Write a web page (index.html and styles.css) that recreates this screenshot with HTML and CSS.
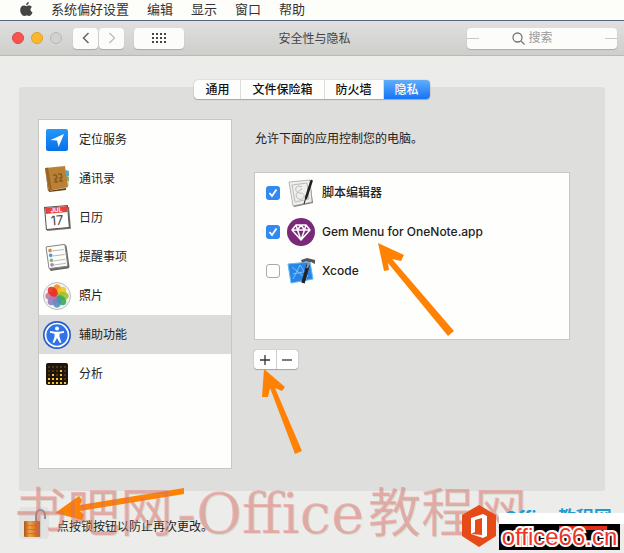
FILE: index.html
```html
<!DOCTYPE html>
<html lang="zh-CN">
<head>
<meta charset="utf-8">
<meta name="viewport" content="width=device-width, initial-scale=1">
<title>安全性与隐私</title>
<link rel="stylesheet" href="styles.css">
</head>
<body>
<nav class="menubar">
  <svg class="apple" width="14" height="16" viewBox="0 0 14 16" aria-hidden="true"><path fill="#444" d="M9.800 1c.1 1.700-1.200 3.300-2.700 3.300C6.900 2.700 8.300 1.200 9.800 1ZM7.200 5.200c.8 0 1.700-.7 3-.7 1.200 0 2.200.6 2.800 1.500-2.200 1.300-1.900 4.400.5 5.300-.5 1.500-1.700 3.700-3 3.700-1 0-1.400-.6-2.700-.6s-1.700.6-2.700.6C3.200 15 1.200 11.900 1.200 9c0-2.900 1.700-4.500 3.500-4.500 1.100 0 1.900.7 2.500.7Z"/></svg>
  <a href="#">系统偏好设置</a><a href="#">编辑</a><a href="#">显示</a><a href="#">窗口</a><a href="#">帮助</a>
</nav>
<header class="titlebar">
  <div class="tools">
    <button class="light red" aria-label="关闭"></button>
    <button class="light amber" aria-label="最小化"></button>
    <button class="light off" aria-label="缩放" disabled></button>
    <div class="history">
      <button aria-label="后退"><svg width="10" height="14" viewBox="0 0 10 14" fill="none" stroke="#666" stroke-width="1.500"><path d="M7.500 2 2.500 7l5 5"/></svg></button>
      <button aria-label="前进"><svg width="10" height="14" viewBox="0 0 10 14" fill="none" stroke="#bbb" stroke-width="1.300"><path d="m2.500 2 5 5-5 5"/></svg></button>
    </div>
    <button class="grid-button" aria-label="显示全部"><svg width="14" height="10" viewBox="0 0 14 10" stroke="#444" stroke-width="2" stroke-dasharray="2 2"><path d="M0 1h14M0 5h14M0 9h14"/></svg></button>
  </div>
  <h1>安全性与隐私</h1>
  <label class="search">
    <svg width="13" height="13" viewBox="0 0 13 13" fill="none" stroke="#777" stroke-width="1.300"><circle cx="5.500" cy="5.500" r="4.500"/><path d="m9 9 3.500 3.500"/></svg>
    <input type="text" placeholder="搜索" aria-label="搜索">
  </label>
</header>
<main>
  <div class="tabs">
    <button>通用</button><button>文件保险箱</button><button>防火墙</button><button class="active">隐私</button>
  </div>
  <section class="panel">
    <ul class="sidebar">
      <li><svg width="28" height="28" viewBox="0 0 28 28"><defs><linearGradient id="loc" x2="0" y2="1"><stop stop-color="#2598fb"/><stop offset="1" stop-color="#0870e8"/></linearGradient></defs><rect x="3" y="3" width="22" height="22" rx="2" fill="url(#loc)"/><path fill="#fff" d="M21 8 15.500 21l-1.500-6.500L7.500 14Z"/></svg><a href="#">定位服务</a></li>
      <li><svg width="28" height="28" viewBox="0 0 28 28"><path fill="#d8d4c6" d="m6 25 18-2 2-3-1-14-3-1Z"/><path fill="#5aa9c9" d="m23 5 3 1v5l-3 1Z"/><path fill="#78b568" d="m23 11 3 1v4h-3Z"/><path fill="#654016" d="m2 3 3 23 18-3v2L6 27Z"/><path fill="#b98036" d="m2 3 20-2 3 21-19 4Z"/><path fill="#996624" d="m2 3 3-.3L9 25l-3 1Z"/><g fill="none" stroke="#8a5a20" stroke-width="1.500"><path d="M10 10h3l1 3-2 1 2 3h-3M15 9h3l1 3-2 1 2 3h-3"/></g></svg><a href="#">通讯录</a></li>
      <li><svg width="28" height="28" viewBox="0 0 28 28"><g transform="rotate(-5 14 14)"><rect x="3" y="4" width="24" height="22" fill="#777"/><rect x="2.500" y="2.500" width="23" height="22" fill="#fff" stroke="#555"/><path fill="#e3433d" d="M3 3h22v6H3z"/><text x="14" y="8" text-anchor="middle" font-size="6" font-weight="700" fill="#fff">JUL</text><text x="14" y="21" text-anchor="middle" font-size="13" fill="#444">17</text></g></svg><a href="#">日历</a></li>
      <li><svg width="28" height="28" viewBox="0 0 28 28"><g transform="rotate(-8 14 14)"><rect x="5" y="3" width="20" height="24" rx="2" fill="#666"/><rect x="4.500" y="2.500" width="19" height="22" rx="1" fill="#fcfcf8" stroke="#888"/><path stroke="#bbb" d="M10 7.500h12M10 12.500h12M10 17.500h12M10 21.500h12"/><circle cx="8" cy="6.500" r="1.800" fill="#dc8c38"/><circle cx="8" cy="11.500" r="1.800" fill="#4a9ade"/><circle cx="8" cy="16.500" r="1.800" fill="#75b777"/><circle cx="8" cy="21" r="1.800" fill="#a685b5"/></g></svg><a href="#">提醒事项</a></li>
      <li><svg width="28" height="28" viewBox="0 0 28 28"><circle cx="14" cy="14" r="13.500" fill="#f5f4f2" stroke="#bbb"/><g fill-opacity=".88"><ellipse cx="14" cy="8" rx="4.300" ry="5.800" fill="#f58a14"/><ellipse cx="14" cy="8" rx="4.300" ry="5.800" fill="#edc823" transform="rotate(45 14 14)"/><ellipse cx="14" cy="8" rx="4.300" ry="5.800" fill="#98c22a" transform="rotate(90 14 14)"/><ellipse cx="14" cy="8" rx="4.300" ry="5.800" fill="#35a852" transform="rotate(135 14 14)"/><ellipse cx="14" cy="8" rx="4.300" ry="5.800" fill="#4590b8" transform="rotate(180 14 14)"/><ellipse cx="14" cy="8" rx="4.300" ry="5.800" fill="#7f80c2" transform="rotate(225 14 14)"/><ellipse cx="14" cy="8" rx="4.300" ry="5.800" fill="#c573a2" transform="rotate(270 14 14)"/><ellipse cx="14" cy="8" rx="4.300" ry="5.800" fill="#e62d1e" transform="rotate(315 14 14)"/></g></svg><a href="#">照片</a></li>
      <li class="selected"><svg width="28" height="28" viewBox="0 0 28 28"><circle cx="14" cy="14" r="14" fill="#245bd0"/><circle cx="14" cy="14" r="11.500" fill="#2f73e6" stroke="#fff" stroke-width="1.700"/><circle cx="14" cy="7.500" r="2" fill="#fff"/><path fill="#fff" d="m7 10 5 .7h4L21 10v1.700l-4.500 1V16l2 5.500-1.700.6L14 17l-2.800 5.100-1.700-.6 2-5.500v-3.300l-4.500-1Z"/></svg><a href="#">辅助功能</a></li>
      <li><svg width="28" height="28" viewBox="0 0 28 28"><rect x="3" y="3" width="22" height="22" rx="2" fill="#20150c"/><g fill="none" stroke-width="2" stroke-dasharray="2 2"><path stroke="#4d3617" d="M5 7h18M5 11h18M5 15h18M5 19h18"/><path stroke="#f2c436" d="M5 23h18M5 19h10M17 19h2M9 15h2M17 15h2M17 11h2"/></g></svg><a href="#">分析</a></li>
    </ul>
    <div class="detail">
      <p>允许下面的应用控制您的电脑。</p>
      <ul class="apps">
        <li><label><input type="checkbox" checked><svg width="28" height="28" viewBox="0 0 28 28"><path fill="#777" d="m3 4 20-2 3 22-19 4Z"/><path fill="#efefeb" stroke="#999" stroke-width=".7" d="m2 3 21-2 2 22-19 4Z"/><path fill="none" stroke="#bbb" d="m5 6 15-2 2 16-14 3ZM15 8c-8-4-8 6-2 6 7 0 4 8-1 6s-3-7 3-10"/><path stroke="#222" stroke-width="2.500" stroke-linecap="round" d="M24.500 2 19 19"/><path stroke="#222" d="m19 18-2 7"/></svg><span>脚本编辑器</span></label></li>
        <li><label><input type="checkbox" checked><svg width="28" height="28" viewBox="0 0 28 28"><circle cx="14" cy="14" r="14" fill="#7a2878"/><path fill="none" stroke="#fff" stroke-width="1.500" stroke-linejoin="round" d="M9 7h10l4 5-9 10-9-10Zm-4 5h18M9 7l1.500 5L14 22l3.500-10L19 7M10.500 12 14 7l3.500 5"/></svg><span>Gem Menu for OneNote.app</span></label></li>
        <li><label><input type="checkbox"><svg width="28" height="28" viewBox="0 0 28 28"><path fill="#2786e5" stroke="#66b4f6" d="m1 7 22-2 3 17-22 4Z"/><path fill="none" stroke="#91c9fa" stroke-width=".8" d="m6 22 7-14 8 12M6 17l15-3M5 10l15 12"/><path stroke="#222" stroke-width="3.500" d="m16 26 5-18"/><path stroke="#999" stroke-width="2" d="m20 11 3-8"/><path fill="#555" d="m14 3 6-2 8 2v4l-4-2-5-.5-4 1Z"/></svg><span>Xcode</span></label></li>
      </ul>
      <div class="edit">
        <button aria-label="添加"><svg width="12" height="12" viewBox="0 0 12 12" stroke="#333" stroke-width="1.300"><path d="M1 6h10M6 1v10"/></svg></button>
        <button aria-label="移除"><svg width="12" height="12" viewBox="0 0 12 12" stroke="#333" stroke-width="1.300"><path d="M1 6h10"/></svg></button>
      </div>
    </div>
  </section>
  <footer>
    <button class="lock" aria-label="锁"><svg width="30" height="32" viewBox="0 0 30 32"><defs><linearGradient id="brass"><stop stop-color="#a95516"/><stop offset=".35" stop-color="#f2a04b"/><stop offset=".7" stop-color="#d57a25"/><stop offset="1" stop-color="#9a4f16"/></linearGradient></defs><path fill="none" stroke="#8b91a2" stroke-width="2" d="M17 15V9c0-8 9-8 9 0v3"/><rect x="5" y="14" width="16" height="16" rx="1" fill="url(#brass)"/><path stroke="#b8681f" stroke-width=".6" d="M5 18.500h16M5 22.500h16M5 26.500h16"/></svg></button>
    <span>点按锁按钮以防止再次更改。</span>
  </footer>
</main>
<svg class="arrows" width="624" height="553" viewBox="0 0 624 553" aria-hidden="true"><g fill="#ff8205"><path d="m378 243 26 12-3 6-9-2 62 72-6 5-60-73 1 7-5 1Z"/><path d="m264 369 21 18-3 4-7-3 27 63-7 3-25-66-2 9h-6Z"/><path d="m55 513 24-17 3 4-2 5 104-17v6L80 511l4 4-2 5Z"/></g></svg>
<div class="watermark" aria-hidden="true"><span>书吧网</span><span class="latin">-Office</span><span>教程网</span></div>
<aside class="brand">
  <svg class="hex" width="36" height="44" viewBox="0 0 36 44"><path fill="#e64a16" d="m18 1 17 10v21L18 43 1 32V11Z"/><path fill="#fff" fill-rule="evenodd" d="m10 14 12-4 4 2v20l-4 2-12-4 11 1V14l-7 2v12l-4 2Z"/></svg>
  <div class="brand-text"><div class="site-name">Office教程网</div><div class="blank"></div><div class="domain">office66.cn</div></div>
</aside>
</body>
</html>
```
FILE: styles.css
```css
* { box-sizing: border-box; }
body {
  position: relative;
  min-height: 100vh;
  margin: 0;
  overflow: hidden;
  background: #ececea;
  color: #222;
  font: 12px/18px Inter, "Noto Sans CJK SC", sans-serif;
}
button { padding: 0; border: 0; font: inherit; color: inherit; }
a { color: inherit; text-decoration: none; }
ul { margin: 0; padding: 0; list-style: none; }
svg { display: block; flex: none; }
.menubar {
  display: flex;
  align-items: center;
  gap: 18px;
  height: 21px;
  padding: 0 19px 2px;
  border-bottom: 1px solid #53647c;
  background: #fdfdfa;
  color: #333;
  font-size: 13px;
}
.titlebar {
  display: grid;
  grid-template-columns: 1fr auto 1fr;
  align-items: center;
  height: 35px;
  padding: 0 7px 0 12px;
  border-bottom: 1px solid #b9b9b7;
  background: linear-gradient(#e0e0de, #cececb);
}
.tools { display: flex; align-items: center; gap: 7px; }
.light { width: 12px; height: 12px; border-radius: 50%; }
.red { background: #f85550; border: 1px solid #df4642; }
.amber { background: #fbb82e; border: 1px solid #dfa02b; }
.off { background: #d2d2d0; border: 1px solid #b7b7b5; }
.history { display: flex; gap: 1px; margin-left: 4px; }
.history button, .grid-button {
  display: grid;
  place-items: center;
  width: 25px;
  height: 21px;
  border-radius: 4px;
  background: #fcfcfb;
  box-shadow: 0 1px 1px #aaa;
}
.tools .grid-button { width: 50px; margin-left: 3px; }
h1 { margin: 2px 0 0; font-size: 12px; font-weight: 400; color: #444; }
.search {
  display: flex;
  align-items: center;
  justify-content: center;
  justify-self: end;
  gap: 4px;
  width: 150px;
  height: 21px;
  border-radius: 4px;
  background: linear-gradient(#c9c9c9, #c9c9c9) 0 50% / 12px 1px no-repeat, linear-gradient(#c9c9c9, #c9c9c9) 100% 50% / 12px 1px no-repeat, #fcfcfb;
  box-shadow: 0 1px 1px #aaa;
}
.search input { width: 44px; padding: 0; border: 0; outline: 0; background: none; font: inherit; }
.search input::placeholder { color: #999; opacity: 1; }
main { padding: 24px 19px 0; }
.tabs {
  position: relative;
  display: flex;
  width: max-content;
  margin: 0 auto -12px;
  border-radius: 4px;
  background: #fdfdfb;
  box-shadow: 0 0 1px #888, 0 1px 1px #aaa;
}
.tabs button { height: 19px; padding: 0 11px; background: none; border-right: 1px solid #ddd; color: #111; font-weight: 500; }
.tabs .active { border: 0; border-radius: 0 4px 4px 0; background: linear-gradient(#60aefa, #1474f5); color: #fff; }
.panel {
  display: grid;
  grid-template-columns: 194px minmax(0, 1fr);
  gap: 22px;
  min-height: 404px;
  padding: 32px 35px 22px 19px;
  border-radius: 3px;
  background: #dededc;
}
.sidebar, .apps { border: 1px solid #c7c7c5; background: #fefefc; }
.sidebar { min-height: 350px; }
.sidebar li { display: flex; align-items: center; gap: 8px; height: 39px; padding-left: 4px; }
.sidebar .selected { background: #dcdcda; }
.detail p { margin: 11px 1px 24px; }
.apps { height: 168px; }
.apps label { display: flex; align-items: center; height: 39px; padding-left: 11px; font-weight: 500; }
.apps input {
  width: 14px;
  height: 14px;
  margin: 0 7px 0 0;
  appearance: none;
  border: 1px solid #aaa;
  border-radius: 3px;
  background: #fff;
}
.apps input:checked {
  border: 0;
  background: #3289ef url("data:image/svg+xml,%3Csvg xmlns='http://www.w3.org/2000/svg' viewBox='0 0 14 14'%3E%3Cpath d='m3.500 7 2.500 3 4.500-6.500' fill='none' stroke='white' stroke-width='1.800'/%3E%3C/svg%3E");
}
.apps span { margin-left: 7px; }
.edit { display: flex; width: 44px; height: 19px; margin-top: 10px; border-radius: 3px; background: #fff; box-shadow: 0 0 1px #777, 0 1px 1px #aaa; }
.edit button { display: grid; flex: 1; place-items: center; background: none; }
.edit button + button { border-left: 1px solid #ccc; }
footer { display: flex; align-items: center; gap: 8px; margin-top: 16px; }
footer span { margin-top: 8px; }
.lock { width: 30px; height: 32px; border-radius: 4px; background: #e2e2e0; }
.arrows { position: absolute; top: 0; left: 0; pointer-events: none; }
.watermark {
  position: absolute;
  top: 484px;
  left: 14px;
  display: flex;
  align-items: center;
  gap: 4px;
  color: rgba(240, 90, 90, .38);
  font: 400 53px/60px "DejaVu Serif", "Noto Sans CJK SC", serif;
  text-shadow: 1px 1px 0 rgba(140, 180, 140, .25);
  white-space: nowrap;
  pointer-events: none;
}
.watermark .latin { font-size: 56px; }
.brand { position: absolute; top: 504px; left: 461px; right: 0; display: flex; }
.brand-text { flex: 1; margin-left: 2px; padding-top: 1px; }
.site-name { height: 8px; padding-left: 5px; overflow: hidden; color: #209bd2; font-size: 18px; font-weight: 700; line-height: 26px; }
.blank { height: 11px; background: #fff; }
.domain {
  width: 121px;
  height: 26px;
  background: linear-gradient(#e32c16, #e32c16) 60px 2px / 48px 4px no-repeat, #000;
  color: #ef3328;
  font: 24px/26px "Liberation Sans", sans-serif;
  text-align: center;
  -webkit-text-stroke: 4px #fff;
  paint-order: stroke fill;
}
```
